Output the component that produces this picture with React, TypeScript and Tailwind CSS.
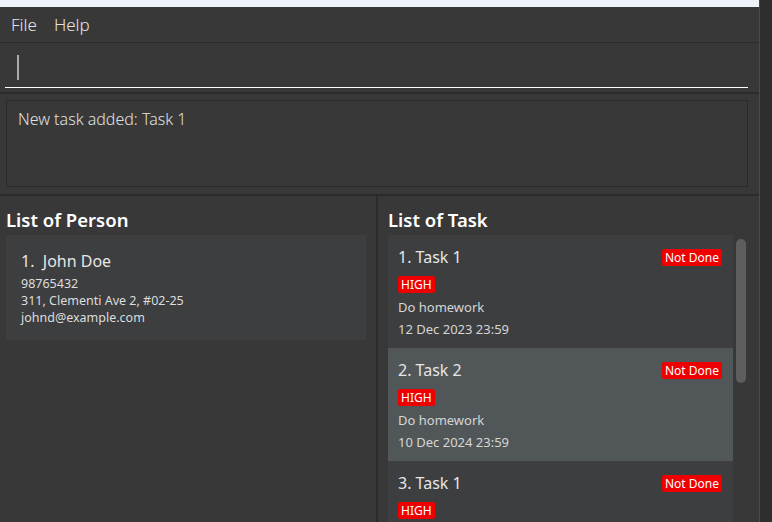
import React from 'react';

type Task = { id: number; name: string; status: string; priority: string; desc: string; due: string };

const TASKS: Task[] = [
    { id: 1, name: 'Task 1', status: 'Not Done', priority: 'HIGH', desc: 'Do homework', due: '12 Dec 2023 23:59' },
    { id: 2, name: 'Task 2', status: 'Not Done', priority: 'HIGH', desc: 'Do homework', due: '10 Dec 2024 23:59' },
    { id: 3, name: 'Task 1', status: 'Not Done', priority: 'HIGH', desc: 'Do homework', due: '12 Dec 2023 23:59' },
];

const font = { fontFamily: '"Noto Sans", "Open Sans", sans-serif' };

const TaskCard: React.FC<{ task: Task; index: number }> = ({ task, index }) => (
    <div className={`h-[113px] shrink-0 pl-[10px] pr-[11px] pt-[12px] ${index % 2 === 1 ? 'bg-[#515658]' : 'bg-[#3c3e3f]'}`}>
        <div className="flex justify-between items-center h-[20px]">
            <span className="text-[16px] text-[#e6e6e6]">{index + 1}. {task.name}</span>
            <span className="bg-[#ee0000] text-white text-[12px] leading-[17px] px-[3px] rounded-[2px]">{task.status}</span>
        </div>
        <div className="mt-[9px] flex">
            <span className="bg-[#ee0000] text-white text-[12px] leading-[17px] px-[3px] rounded-[2px]">{task.priority}</span>
        </div>
        <p className="mt-[6px] text-[13px] leading-[17px] text-[#d6d6d6]">{task.desc}</p>
        <p className="mt-[5px] text-[13px] leading-[17px] text-[#d6d6d6]">{task.due}</p>
    </div>
);

export default function App() {
    return (
        <div className="w-[772px] h-[522px] flex bg-[#383838] overflow-hidden" style={font}>
            <div className="w-[759px] flex flex-col">
                <div className="h-[7px] bg-[#eef3f9] shrink-0" />

                {/* menu bar */}
                <div className="h-[36px] shrink-0 flex items-center gap-[17px] px-[11px] border-b border-[#2b2b2b]">
                    <span className="text-[17px] font-light text-[#e4e4e4]">File</span>
                    <span className="text-[17px] font-light text-[#e4e4e4]">Help</span>
                </div>

                {/* command box */}
                <div className="h-[51px] shrink-0 px-[5px] pt-[12px] border-b-2 border-[#2b2b2b]">
                    <div className="h-[33px] border-b border-white pl-[12px] mr-[6px]">
                        <div className="w-[2px] h-[25px] bg-[#aaaaaa]" />
                    </div>
                </div>

                {/* result display */}
                <div className="h-[102px] shrink-0 pl-[6px] pr-[11px] pt-[6px] border-b-2 border-[#2b2b2b]">
                    <div className="h-[87px] border border-[#2a2a2a] px-[11px] pt-[6px]">
                        <p className="text-[16px] font-light text-[#e0e0e0]">New task added: Task 1</p>
                    </div>
                </div>

                {/* lists */}
                <div className="flex-1 flex min-h-0">
                    <div className="w-[378px] shrink-0 border-r-2 border-[#2b2b2b] pl-[6px] pr-[10px]">
                        <h2 className="text-[18.5px] font-semibold text-white leading-[24px] mt-[12px] h-[27px]">List of Person</h2>
                        <div className="bg-[#3c3e3f] h-[105px] pl-[15px] pt-[16px]">
                            <p className="text-[16px] text-[#e6e6e6] leading-[20px]">1.&nbsp;&nbsp;John Doe</p>
                            <p className="text-[12.5px] text-[#dddddd] leading-[17px] mt-[4px]">98765432</p>
                            <p className="text-[12.5px] text-[#dddddd] leading-[17px]">311, Clementi Ave 2, #02-25</p>
                            <p className="text-[12.5px] text-[#dddddd] leading-[17px]">johnd@example.com</p>
                        </div>
                    </div>
                    <div className="flex-1 pl-[10px] flex flex-col min-h-0">
                        <h2 className="text-[18.5px] font-semibold text-white leading-[24px] mt-[12px] h-[27px] shrink-0">List of Task</h2>
                        <div className="flex-1 flex min-h-0">
                            <div className="w-[345px] flex flex-col overflow-hidden">
                                {TASKS.map((t, i) => (
                                    <TaskCard key={t.id + '-' + i} task={t} index={i} />
                                ))}
                            </div>
                            <div className="ml-[3px] w-[10px] pt-[4px]">
                                <div className="h-[144px] bg-[#5e5e5e] rounded-[5px]" />
                            </div>
                        </div>
                    </div>
                </div>
            </div>
            <div className="flex-1 border-l border-[#4a4a4a] bg-[#2e2e2e]" />
        </div>
    );
}
